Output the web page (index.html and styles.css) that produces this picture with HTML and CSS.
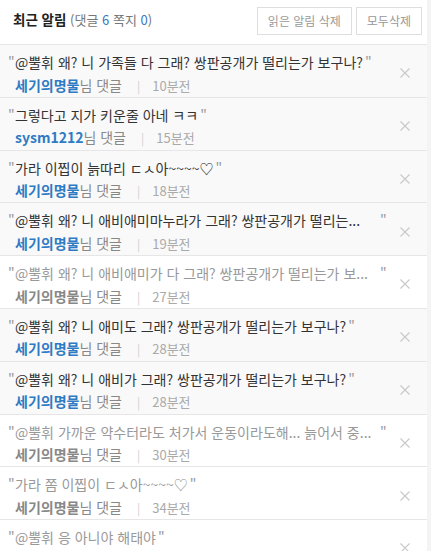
FILE: index.html
```html
<!DOCTYPE html>
<html lang="ko">
<head>
<meta charset="utf-8">
<link rel="stylesheet" href="styles.css">
</head>
<body>
<div class="page">
  <div class="panel">
    <div class="head">
      <div class="title"><strong>최근 알림</strong> <span class="count">(댓글 <em>6</em> 쪽지 <em>0</em>)</span></div>
      <div class="actions">
        <button class="btn">읽은 알림 삭제</button>
        <button class="btn">모두삭제</button>
      </div>
    </div>
    <ul class="list">
      <li class="item unread">
        <div class="body">
          <div class="msg"><span class="q1">"</span><span class="txt">@뿔휘 왜? 니 가족들 다 그래? 쌍판공개가 떨리는가 보구나?</span><span class="q2">"</span></div>
          <div class="meta"><b class="name">세기의명물</b>님 댓글<span class="sep">|</span><span class="time">10분전</span></div>
        </div>
        <svg class="x" viewBox="0 0 10 10"><path d="M0.5 0.5L9.5 9.5M9.5 0.5L0.5 9.5"/></svg>
      </li>
      <li class="item unread">
        <div class="body">
          <div class="msg"><span class="q1">"</span><span class="txt">그렇다고 지가 키운줄 아네 ㅋㅋ</span><span class="q2">"</span></div>
          <div class="meta"><b class="name">sysm1212</b>님 댓글<span class="sep">|</span><span class="time">15분전</span></div>
        </div>
        <svg class="x" viewBox="0 0 10 10"><path d="M0.5 0.5L9.5 9.5M9.5 0.5L0.5 9.5"/></svg>
      </li>
      <li class="item unread">
        <div class="body">
          <div class="msg"><span class="q1">"</span><span class="txt">가라 이찝이 늙따리 ㄷㅅ아~~~~♡</span><span class="q2">"</span></div>
          <div class="meta"><b class="name">세기의명물</b>님 댓글<span class="sep">|</span><span class="time">18분전</span></div>
        </div>
        <svg class="x" viewBox="0 0 10 10"><path d="M0.5 0.5L9.5 9.5M9.5 0.5L0.5 9.5"/></svg>
      </li>
      <li class="item unread">
        <div class="body">
          <div class="msg"><span class="q1">"</span><span class="txt cut">@뿔휘 왜? 니 애비애미마누라가 그래? 쌍판공개가 떨리는...</span><span class="q2">"</span></div>
          <div class="meta"><b class="name">세기의명물</b>님 댓글<span class="sep">|</span><span class="time">19분전</span></div>
        </div>
        <svg class="x" viewBox="0 0 10 10"><path d="M0.5 0.5L9.5 9.5M9.5 0.5L0.5 9.5"/></svg>
      </li>
      <li class="item read">
        <div class="body">
          <div class="msg"><span class="q1">"</span><span class="txt cut">@뿔휘 왜? 니 애비애미가 다 그래? 쌍판공개가 떨리는가 보...</span><span class="q2">"</span></div>
          <div class="meta"><b class="name">세기의명물</b>님 댓글<span class="sep">|</span><span class="time">27분전</span></div>
        </div>
        <svg class="x" viewBox="0 0 10 10"><path d="M0.5 0.5L9.5 9.5M9.5 0.5L0.5 9.5"/></svg>
      </li>
      <li class="item unread">
        <div class="body">
          <div class="msg"><span class="q1">"</span><span class="txt">@뿔휘 왜? 니 애미도 그래? 쌍판공개가 떨리는가 보구나?</span><span class="q2">"</span></div>
          <div class="meta"><b class="name">세기의명물</b>님 댓글<span class="sep">|</span><span class="time">28분전</span></div>
        </div>
        <svg class="x" viewBox="0 0 10 10"><path d="M0.5 0.5L9.5 9.5M9.5 0.5L0.5 9.5"/></svg>
      </li>
      <li class="item unread">
        <div class="body">
          <div class="msg"><span class="q1">"</span><span class="txt">@뿔휘 왜? 니 애비가 그래? 쌍판공개가 떨리는가 보구나?</span><span class="q2">"</span></div>
          <div class="meta"><b class="name">세기의명물</b>님 댓글<span class="sep">|</span><span class="time">28분전</span></div>
        </div>
        <svg class="x" viewBox="0 0 10 10"><path d="M0.5 0.5L9.5 9.5M9.5 0.5L0.5 9.5"/></svg>
      </li>
      <li class="item read">
        <div class="body">
          <div class="msg"><span class="q1">"</span><span class="txt cut">@뿔휘 가까운 약수터라도 처가서 운동이라도해... 늙어서 중...</span><span class="q2">"</span></div>
          <div class="meta"><b class="name">세기의명물</b>님 댓글<span class="sep">|</span><span class="time">30분전</span></div>
        </div>
        <svg class="x" viewBox="0 0 10 10"><path d="M0.5 0.5L9.5 9.5M9.5 0.5L0.5 9.5"/></svg>
      </li>
      <li class="item read">
        <div class="body">
          <div class="msg"><span class="q1">"</span><span class="txt">가라 쫌 이찝이 ㄷㅅ아~~~~♡</span><span class="q2">"</span></div>
          <div class="meta"><b class="name">세기의명물</b>님 댓글<span class="sep">|</span><span class="time">34분전</span></div>
        </div>
        <svg class="x" viewBox="0 0 10 10"><path d="M0.5 0.5L9.5 9.5M9.5 0.5L0.5 9.5"/></svg>
      </li>
      <li class="item read">
        <div class="body">
          <div class="msg"><span class="q1">"</span><span class="txt">@뿔휘 응 아니야 해태야</span><span class="q2">"</span></div>
          <div class="meta"><b class="name">세기의명물</b>님 댓글<span class="sep">|</span><span class="time">35분전</span></div>
        </div>
        <svg class="x" viewBox="0 0 10 10"><path d="M0.5 0.5L9.5 9.5M9.5 0.5L0.5 9.5"/></svg>
      </li>
    </ul>
  </div>
  <div class="track"></div>
</div>
</body>
</html>
```

FILE: styles.css
```css
html, body {
  margin: 0;
  padding: 0;
  background: #fff;
  height: 100%;
  overflow: hidden;
}
body {
  font-family: "Noto Sans CJK KR", "Noto Sans", sans-serif;
  color: #333;
}
.page {
  display: flex;
  height: 551px;
  overflow: hidden;
}
.panel {
  width: 427px;
  flex: none;
}
.track {
  flex: 1;
  background: #f4f4f4;
}
.head {
  display: flex;
  align-items: center;
  justify-content: space-between;
  height: 45px;
  padding: 0 5px 0 13px;
  box-sizing: border-box;
  border-bottom: 1px solid #e6e6e6;
}
.title {
  font-size: 13px;
  line-height: 20px;
  margin-top: -6px;
}
.title strong {
  font-weight: bold;
  color: #222;
  font-size: 13.5px;
}
.count {
  color: #777;
}
.count em {
  font-style: normal;
  color: #3a78c2;
}
.actions {
  display: flex;
  gap: 4px;
  margin-top: -3px;
}
.btn {
  font-family: inherit;
  font-size: 12px;
  color: #999;
  background: #fff;
  border: 1px solid #dedede;
  height: 28px;
  padding: 0 10px;
  line-height: 26px;
}
.list {
  list-style: none;
  margin: 0;
  padding: 0;
}
.item {
  display: flex;
  align-items: center;
  border-bottom: 1px solid #e6e6e6;
  padding: 7px 0 2.3px 15px;
}
.item.unread {
  background: #f9f9f9;
}
.item.read {
  background: #fff;
}
.body {
  flex: 1;
  min-width: 0;
}
.msg {
  font-size: 14px;
  line-height: 20px;
  height: 20px;
  white-space: nowrap;
  display: flex;
}
.q1 {
  margin-left: -7px;
  width: 7px;
  color: #999;
}
.q2 {
  color: #999;
  margin-left: 2px;
}
.txt.cut {
  width: 363px;
  overflow: hidden;
}
.unread .msg {
  color: #333;
}
.read .msg {
  color: #999;
}
.meta {
  font-size: 14px;
  line-height: 20px;
  height: 20px;
  margin-top: 2.5px;
  color: #888;
  white-space: nowrap;
  display: flex;
  align-items: baseline;
}
.name {
  font-weight: bold;
}
.unread .name {
  color: #2e7bc4;
}
.read .name {
  color: #888;
}
.sep {
  color: #d0d0d0;
  margin: 0 12px 0 15px;
  font-size: 12px;
}
.time {
  font-size: 13px;
  color: #aaa;
}
.x {
  width: 10px;
  height: 10px;
  flex: none;
  margin: 0 17px 0 8px;
  fill: none;
  stroke: #c8c8c8;
  stroke-width: 1.1;
}
```
